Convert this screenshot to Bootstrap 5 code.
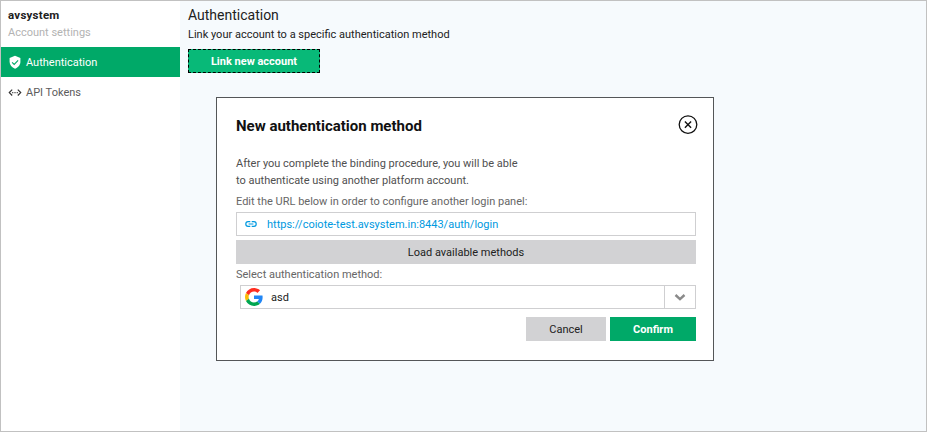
<!DOCTYPE html>
<html lang="en">
<head>
<meta charset="utf-8">
<meta name="viewport" content="width=device-width, initial-scale=1">
<title>Authentication</title>
<link href="https://cdn.jsdelivr.net/npm/bootstrap@5.3.0/dist/css/bootstrap.min.css" rel="stylesheet">
<style>
body{font-family:Roboto,"Liberation Sans",sans-serif;font-size:11px;line-height:17px;color:#212121}
.app-frame{height:100vh;border:1px solid #c1c1c1;background:#f6fafd}
.side-panel{width:179px}
.side-head{height:46px;padding:6px 7px 0}
.side-head .account-name{font-size:11.5px;letter-spacing:.25px;color:#212121}
.side-head .account-sub{color:#b3b3b3}
.side-panel .nav-link{height:30px;padding:0 7px;gap:4px;color:#5c5c5c;border-radius:0}
.side-panel .nav-link.active{background:#00a968;color:#fff}
.main-area{padding:5px 0 0 8px}
.main-area h1{font-size:14px;line-height:18px}
.page-lead{padding-top:2px;height:25px}
.flat-btn{--bs-btn-border-radius:0;--bs-btn-font-size:11px;--bs-btn-padding-y:0;--bs-btn-padding-x:0;--bs-btn-border-width:0;height:24px;line-height:24px}
.btn-green,.btn-green:hover{background:#00a968;color:#fff;padding-top:1px}
.btn-grey,.btn-grey:hover{background:#d2d2d4;color:#212121;padding-top:1px}
.link-account,.link-account:hover{width:132px;background:#08b978;border:1px dashed #000;line-height:22px}
.w-cancel{width:80px}
.w-confirm{width:86px}
.dialog-box{width:498px;height:264px;margin:24px 0 0 28px;padding:0 17px 0 19px;border:1px solid #545658;background:#fff}
.dialog-head{height:57px}
.dialog-head h2{font-size:15px;line-height:20px;padding-bottom:2px;color:#111}
.close-dialog{margin:-3px -2px 0 0}
.dialog-text{color:#4f4f4f}
.dialog-label{color:#666;height:19px}
.url-label{margin-top:4px}
.pick-label{margin-top:2px}
.field-box{height:24px;border:1px solid #cfcfd1;background:#fff}
.url-box{padding-left:8px;gap:10px}
.url-text{color:#0099e0}
.pick-value{padding-left:4px;gap:8px}
.drop-toggle{width:31px;border-left:1px solid #cfcfd1}
</style>
</head>
<body>
<div class="app-frame d-flex overflow-hidden">
  <aside class="side-panel bg-white flex-shrink-0">
    <div class="side-head">
      <div class="account-name fw-bold">avsystem</div>
      <div class="account-sub">Account settings</div>
    </div>
    <nav class="nav flex-column">
      <a class="nav-link active d-flex align-items-center" href="#">
        <svg width="14" height="14" viewBox="0 0 14 14"><path d="M7 .8 12.4 3v3.800c0 3.100-2.200 5.800-5.400 6.900-3.200-1.100-5.400-3.800-5.400-6.900V3z" fill="#fff"/><path d="m4.100 7.300 2.100 2.100 3.900-4" fill="none" stroke="#00a968" stroke-width="1.100"/></svg>
        <span>Authentication</span>
      </a>
      <a class="nav-link d-flex align-items-center" href="#">
        <svg width="14" height="14" viewBox="0 0 14 14"><path d="M4.200 4.700 1.300 7.600l2.900 2.900M9.800 4.700l2.900 2.900-2.900 2.900" fill="none" stroke="#333" stroke-width="1.200"/><path d="M4.200 7.100h1.100v1.100H4.200zM6.450 7.100h1.100v1.100h-1.100zM8.700 7.100h1.100v1.100H8.700z" fill="#333"/></svg>
        <span>API Tokens</span>
      </a>
    </nav>
  </aside>
  <main class="main-area flex-grow-1">
    <h1 class="fw-normal mb-0">Authentication</h1>
    <p class="page-lead mb-0">Link your account to a specific authentication method</p>
    <button class="btn flat-btn btn-green link-account fw-bold d-block" type="button">Link new account</button>
    <section class="dialog-box">
      <div class="dialog-head d-flex justify-content-between align-items-center">
        <h2 class="fw-bold mb-0">New authentication method</h2>
        <button class="btn flat-btn close-dialog d-flex align-items-center" type="button" aria-label="Close"><svg width="20" height="20" viewBox="0 0 20 20" fill="none" stroke="#111"><circle cx="10" cy="9.600" r="8.800" stroke-width="1.300"/><path d="m6.900 6.500 6.200 6.200m0-6.200-6.200 6.200" stroke-width="1.400"/></svg></button>
      </div>
      <p class="dialog-text mb-0">After you complete the binding procedure, you will be able<br>to authenticate using another platform account.</p>
      <div class="dialog-label url-label">Edit the URL below in order to configure another login panel:</div>
      <div class="field-box url-box d-flex align-items-center">
        <svg width="12" height="12" viewBox="0 0 12 12" fill="none" stroke="#0099e0" stroke-width="1.200"><path d="M5.300 3.700H3.100a2.300 2.300 0 0 0 0 4.600h2.200M6.700 3.700h2.200a2.300 2.300 0 0 1 0 4.600H6.700M3.600 6h4.800"/></svg>
        <span class="url-text">https://coiote-test.avsystem.in:8443/auth/login</span>
      </div>
      <button class="btn flat-btn btn-grey w-100 mt-1 d-block" type="button">Load available methods</button>
      <div class="dialog-label pick-label">Select authentication method:</div>
      <div class="field-box pick-box d-flex align-items-stretch ms-1">
        <div class="d-flex align-items-center flex-grow-1 pick-value">
          <svg width="18" height="18" viewBox="0 0 48 48"><path fill="#ff2d20" d="M24 9.500c3.500 0 6.700 1.200 9.200 3.600l6.900-6.900C35.900 2.400 30.500 0 24 0 14.600 0 6.500 5.400 2.600 13.200l8 6.200C12.400 13.700 17.700 9.500 24 9.500z"/><path fill="#2186f5" d="M47 24.600c0-1.600-.2-3.100-.4-4.600H24v9h12.900c-.6 3-2.200 5.500-4.700 7.200l7.700 6C44.400 38 47 31.800 47 24.600z"/><path fill="#fbbc05" d="M10.500 28.600c-.5-1.500-.8-3-.8-4.600s.3-3.100.8-4.600l-7.900-6.200C.9 16.500 0 20.100 0 24s.9 7.500 2.600 10.800z"/><path fill="#00a651" d="M24 48c6.500 0 11.900-2.100 15.900-5.800l-7.700-6c-2.200 1.500-4.900 2.300-8.200 2.300-6.300 0-11.600-4.200-13.500-9.900l-7.900 6.200C6.500 42.600 14.600 48 24 48z"/></svg>
          <span>asd</span>
        </div>
        <div class="drop-toggle d-flex align-items-center justify-content-center"><svg width="12" height="8" viewBox="0 0 12 8"><path d="M1.500 2 6 6.200 10.500 2" fill="none" stroke="#8a8a8a" stroke-width="2.400"/></svg></div>
      </div>
      <div class="d-flex justify-content-end gap-1 mt-2">
        <button class="btn flat-btn btn-grey w-cancel" type="button">Cancel</button>
        <button class="btn flat-btn btn-green w-confirm fw-bold" type="button">Confirm</button>
      </div>
    </section>
  </main>
</div>
<script src="https://cdn.jsdelivr.net/npm/bootstrap@5.3.0/dist/js/bootstrap.bundle.min.js"></script>
</body>
</html>
